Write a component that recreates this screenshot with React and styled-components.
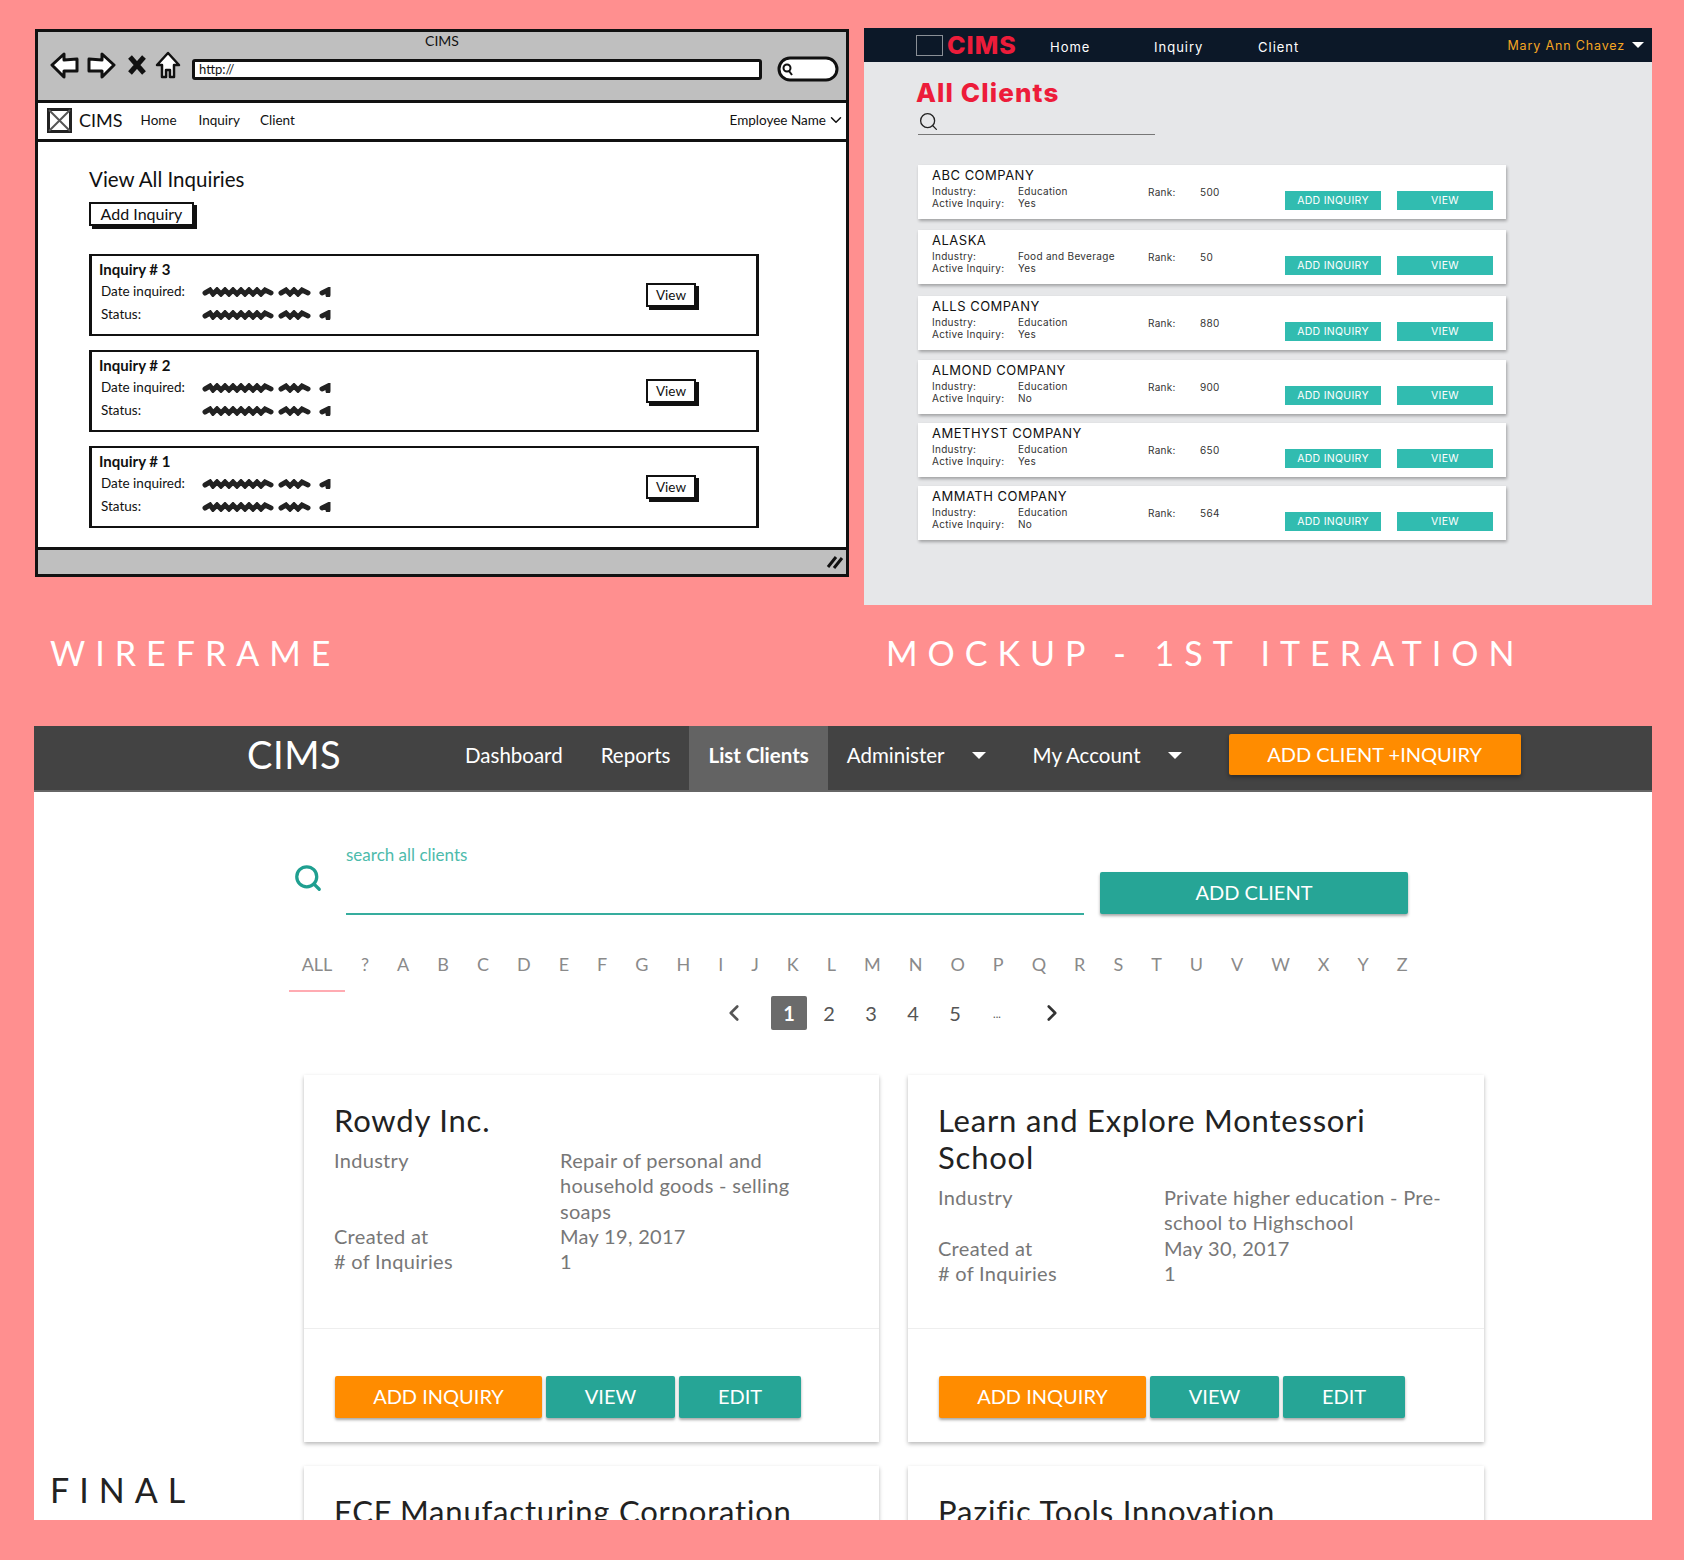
import React from "react";
import styled, { createGlobalStyle } from "styled-components";
import { Search, ChevronLeft, ChevronRight, ChevronDown } from "lucide-react";

const GlobalStyle = createGlobalStyle`
  html, body {
    margin: 0;
    padding: 0;
    background: #ff8f8f;
  }
  * {
    box-sizing: border-box;
  }
`;

const Page = styled.div`
  width: 1684px;
  height: 1560px;
  overflow: hidden;
  padding-top: 28px;
  background: #ff8f8f;
  font-family: "Lato", sans-serif;
`;
const TopRow = styled.div`
  display: flex;
  align-items: flex-start;
  gap: 15px;
  padding-left: 35px;
`;

/* wireframe */
const Wireframe = styled.div`
  width: 814px;
  height: 548px;
  margin-top: 1px;
  display: flex;
  flex-direction: column;
  background: #fff;
  border: 3px solid #111;
  color: #111;
  font-family: "Lato", sans-serif;
`;
const BrowserBar = styled.div`
  height: 71px;
  background: #bfbfbf;
  border-bottom: 3px solid #111;
`;
const BrowserTitle = styled.div`
  text-align: center;
  font-size: 14px;
  line-height: 20px;
  margin-top: -1px;
`;
const BrowserTools = styled.div`
  display: flex;
  align-items: center;
  padding-left: 12px;
  height: 28px;
`;
const UrlBox = styled.div`
  width: 570px;
  height: 21px;
  margin: 8px 0 0 11px;
  padding-left: 4px;
  background: #fff;
  border: 3px solid #111;
  border-radius: 3px;
  font-size: 13px;
  line-height: 15px;
`;
const OvalWrap = styled.div`
  display: flex;
  margin: 8px 0 0 15px;
`;
const WireNav = styled.div`
  height: 39px;
  display: flex;
  align-items: center;
  border-bottom: 3px solid #111;
  padding: 0 0 2px 9px;
  font-size: 13.5px;
`;
const WireBrand = styled.span`
  font-size: 18px;
  margin: 0 18px 0 7px;
`;
const WireLink = styled.span`
  margin-right: ${(props) => props.$gap}px;
`;
const WireUser = styled.span`
  margin-left: auto;
  margin-right: 1px;
  display: flex;
  align-items: center;
  gap: 1px;
`;
const WireMain = styled.div`
  flex: 1;
  padding: 24px 0 0 51px;
`;
const WireTitle = styled.div`
  font-size: 20.5px;
  line-height: 26px;
`;
const WireAdd = styled.div`
  width: 105px;
  height: 24px;
  margin: 10px 0 28px;
  text-align: center;
  font-size: 16px;
  line-height: 20px;
  border: 2px solid #111;
  box-shadow: 3px 3px 0 #111;
`;
const InquiryCard = styled.div`
  width: 670px;
  height: 82px;
  margin-bottom: 14px;
  padding: 2px 0 0 7px;
  display: flex;
  align-items: center;
  border: 3px solid #111;
  border-bottom-width: 2px;
  border-top-width: 2px;
`;
const InquiryText = styled.div`
  flex: 1;
  padding-bottom: 7px;
`;
const InquiryName = styled.div`
  font-size: 15px;
  font-weight: 700;
  line-height: 21px;
`;
const InquiryRow = styled.div`
  display: flex;
  align-items: center;
  font-size: 13.5px;
  line-height: 23px;
`;
const InquiryLabel = styled.span`
  width: 103px;
  padding-left: 2px;
`;
const WireView = styled.div`
  width: 50px;
  height: 24px;
  margin: 0 60px 2px 0;
  text-align: center;
  font-size: 13.5px;
  line-height: 20px;
  border: 2px solid #111;
  box-shadow: 3px 3px 0 #111;
`;
const StatusBar = styled.div`
  height: 27px;
  display: flex;
  align-items: center;
  justify-content: flex-end;
  padding-right: 2px;
  background: #bfbfbf;
  border-top: 3px solid #111;
`;

/* mockup */
const Mockup = styled.div`
  width: 788px;
  height: 577px;
  background: #e6e7e9;
  font-family: "Inter", sans-serif;
`;
const MockNav = styled.div`
  height: 34px;
  display: flex;
  align-items: center;
  padding-left: 52px;
  background: #0c1828;
  color: #fff;
  font-size: 13px;
  letter-spacing: 1px;
`;
const MockLogoBox = styled.div`
  width: 27px;
  height: 21px;
  border: 1px solid #8a8f96;
  background: #0c1828;
`;
const MockBrand = styled.span`
  width: 103px;
  margin-left: 4px;
  color: #ed1c3a;
  font-size: 25px;
  font-weight: 800;
  letter-spacing: 1px;
`;
const MockLink = styled.span`
  width: ${(props) => props.$width}px;
  padding-top: 3px;
`;
const MockUser = styled.span`
  margin-left: auto;
  margin-right: 8px;
  display: flex;
  align-items: center;
  gap: 7px;
  color: #f5a623;
  font-size: 12.5px;
  letter-spacing: 0.85px;
`;
const Caret = styled.span`
  display: inline-block;
  width: 0;
  height: 0;
  border-left: ${(props) => props.$size}px solid transparent;
  border-right: ${(props) => props.$size}px solid transparent;
  border-top: ${(props) => props.$size}px solid ${(props) => props.$color};
`;
const MockMain = styled.div`
  padding: 14px 0 0 54px;
`;
const MockTitle = styled.div`
  margin-left: -2px;
  color: #ed1c3a;
  font-size: 26px;
  font-weight: 800;
  line-height: 34px;
  letter-spacing: 1.1px;
`;
const MockSearch = styled.div`
  width: 237px;
  height: 25px;
  padding-top: 1px;
  border-bottom: 1px solid #777;
  color: #222;
`;
const MockCard = styled.div`
  width: 588px;
  height: 54px;
  margin-top: ${(props) => props.$top}px;
  padding: 1px 0 0 14px;
  display: grid;
  grid-template-columns: 86px 130px 52px 85px 112px 96px;
  grid-template-rows: 18px 13px 12px;
  align-items: center;
  background: #fff;
  box-shadow: 1px 2px 3px rgba(0, 0, 0, 0.3);
  color: #333;
  font-size: 10px;
  letter-spacing: 0.3px;
`;
const MockName = styled.div`
  grid-column: 1 / -1;
  color: #111;
  font-size: 13px;
  line-height: 18px;
  letter-spacing: 0.5px;
`;
const MockCell = styled.div`
  grid-column: ${(props) => props.$col};
  grid-row: ${(props) => props.$row};
`;
const MockRank = styled.div`
  grid-column: ${(props) => props.$col};
  grid-row: 2 / 4;
  padding-bottom: 9px;
`;
const MockButton = styled.div`
  grid-column: ${(props) => props.$col};
  grid-row: 2 / 4;
  width: 96px;
  height: 19px;
  margin-top: 7px;
  background: #31bcb0;
  color: #fff;
  text-align: center;
  font-size: 10.5px;
  line-height: 19px;
`;

/* section captions */
const Captions = styled.div`
  display: flex;
  height: 121px;
  padding: 27px 0 0 50px;
  color: #fff;
  font-size: 34px;
  font-weight: 400;
  line-height: 42px;
`;
const Caption = styled.div`
  width: ${(props) => props.$width}px;
  letter-spacing: ${(props) => props.$spacing}px;
  white-space: nowrap;
`;

/* final design */
const Final = styled.div`
  position: relative;
  width: 1618px;
  height: 794px;
  margin-left: 34px;
  overflow: hidden;
  background: #fff;
`;
const FinalLabel = styled.div`
  position: absolute;
  left: 16px;
  bottom: 9px;
  color: #222;
  font-size: 34px;
  font-weight: 400;
  line-height: 42px;
  letter-spacing: 10px;
`;
const FinalNav = styled.div`
  height: 66px;
  display: flex;
  align-items: flex-start;
  padding-left: 213px;
  background: #434343;
  border-bottom: 2px solid #666;
  color: #fff;
  font-size: 20.5px;
`;
const FinalBrand = styled.div`
  width: 199px;
  height: 58px;
  line-height: 56px;
  font-size: 38px;
  letter-spacing: 0.6px;
`;
const FinalLink = styled.div`
  height: 64px;
  padding: 0 ${(props) => props.$right || 19}px 6px 19px;
  display: flex;
  align-items: center;
  background: ${(props) => (props.$active ? "#636363" : "transparent")};
  font-weight: ${(props) => (props.$active ? 700 : 400)};
`;
const NavCaretGap = styled.span`
  display: flex;
  margin-left: 27px;
`;
const CtaButton = styled.div`
  width: 292px;
  height: 41px;
  margin: 8px 0 0 28px;
  background: #ff8c00;
  border-radius: 2px;
  box-shadow: 0 2px 4px rgba(0, 0, 0, 0.4);
  text-align: center;
  font-size: 20px;
  line-height: 41px;
`;
const SearchRow = styled.div`
  display: flex;
  align-items: flex-start;
  padding: 53px 0 0 259px;
`;
const SearchIconWrap = styled.div`
  width: 87px;
  padding-top: 18px;
  margin-right: -34px;
  color: #1f9f90;
`;
const SearchField = styled.div`
  width: 738px;
  height: 70px;
  border-bottom: 2px solid #36ad9e;
  color: #4dbbab;
  font-size: 17px;
  line-height: 20px;
`;
const TealButton = styled.div`
  width: ${(props) => props.$width}px;
  height: 42px;
  background: #26a596;
  border-radius: 2px;
  box-shadow: 0 2px 3px rgba(0, 0, 0, 0.35);
  color: #fff;
  text-align: center;
  font-size: 20px;
  line-height: 40px;
`;
const AddClient = styled(TealButton)`
  margin: 27px 0 0 16px;
`;
const AlphaRow = styled.div`
  display: flex;
  align-items: center;
  height: 41px;
  margin: 36px 0 0 255px;
  color: #8a8a8a;
  font-size: 18px;
`;
const AlphaAll = styled.div`
  width: 56px;
  height: 41px;
  padding-top: 2px;
  margin-right: 2px;
  text-align: center;
  border-bottom: 2px solid #ffabb2;
`;
const AlphaLetter = styled.div`
  padding: 0 14px;
  margin-top: -16px;
`;
const Pager = styled.div`
  display: flex;
  align-items: center;
  height: 34px;
  margin: 4px 0 0 687px;
  color: #555;
  font-size: 20px;
`;
const PagerCurrent = styled.div`
  width: 36px;
  height: 34px;
  margin: 0 1px 0 24px;
  background: #6b6b6b;
  border-radius: 2px;
  color: #fff;
  font-weight: 700;
  text-align: center;
  line-height: 34px;
`;
const PagerItem = styled.div`
  width: 42px;
  text-align: center;
  font-size: ${(props) => (props.$small ? 11 : 20)}px;
`;
const NextWrap = styled.div`
  display: flex;
  margin-left: 21px;
  color: #333;
`;
const CardGrid = styled.div`
  display: grid;
  grid-template-columns: 575px 576px;
  grid-auto-rows: 367px;
  column-gap: 29px;
  row-gap: 24px;
  margin: 45px 0 0 270px;
`;
const Card = styled.div`
  display: flex;
  flex-direction: column;
  background: #fff;
  box-shadow: 0 2px 4px rgba(0, 0, 0, 0.28);
`;
const CardBody = styled.div`
  height: 254px;
  padding: 27px 30px 0;
  border-bottom: 1px solid #eee;
`;
const CardTitle = styled.div`
  color: #222;
  font-size: 31px;
  line-height: 37px;
  letter-spacing: 0.8px;
  margin-bottom: 9px;
  white-space: nowrap;
`;
const InfoGrid = styled.div`
  display: grid;
  grid-template-columns: 226px 1fr;
  color: #777;
  font-size: 20px;
  line-height: 25.3px;
  letter-spacing: 0.3px;
`;
const CardActions = styled.div`
  display: flex;
  gap: 4px;
  padding: 47px 0 0 31px;
`;
const OrangeButton = styled(TealButton)`
  background: #ff8c00;
`;

const BackArrow = ({ flip }) => (
  <svg width="30" height="28" viewBox="0 0 30 28" style={flip ? { transform: "scaleX(-1)", marginLeft: 6 } : undefined}>
    <path d="M2 14 L14 3 L14 9 L27 8 L27 20 L14 20 L14 26 Z" fill="#fff" stroke="#111" strokeWidth="3" strokeLinejoin="round" />
  </svg>
);

const StopIcon = () => (
  <svg width="20" height="20" viewBox="0 0 20 20" style={{ marginLeft: 11 }}>
    <path d="M3 2 L17 18 M17 2 L3 18" stroke="#111" strokeWidth="5" />
  </svg>
);

const HomeIcon = () => (
  <svg width="26" height="28" viewBox="0 0 26 28" style={{ marginLeft: 8 }}>
    <path d="M13 2 L24 14 L19 14 L19 26 L15 26 L15 19 L11 19 L11 26 L7 26 L7 14 L2 14 Z" fill="#fff" stroke="#111" strokeWidth="2.5" strokeLinejoin="round" />
  </svg>
);

const SearchOval = () => (
  <svg width="62" height="26" viewBox="0 0 62 26">
    <rect x="2" y="2" width="58" height="22" rx="11" fill="#fff" stroke="#111" strokeWidth="3" />
    <circle cx="10" cy="12" r="3.5" fill="none" stroke="#111" strokeWidth="2" />
    <path d="M12 15 L15 19" stroke="#111" strokeWidth="2" />
  </svg>
);

const WireLogo = () => (
  <svg width="25" height="25" viewBox="0 0 25 25">
    <rect x="1.5" y="1.5" width="22" height="22" fill="#fff" stroke="#222" strokeWidth="3" />
    <path d="M2 2 L23 23 M23 2 L2 23" stroke="#555" strokeWidth="2" />
  </svg>
);

const Scribble = () => (
  <svg width="130" height="10" viewBox="0 0 130 10">
    <g fill="none" stroke="#222" strokeWidth="5" strokeLinecap="round">
      <path d="M3 6 L8 3 L11 7 L15 3 L19 7 L23 3 L27 7 L31 3 L35 7 L39 3 L43 7 L47 3 L51 7 L55 3 L59 7 L63 3 L69 6" />
      <path d="M79 6 L84 3 L88 7 L92 3 L96 7 L100 3 L106 6" />
      <path d="M120 6 L126 3 L126 8" />
    </g>
  </svg>
);

const ResizeGrip = () => (
  <svg width="18" height="14" viewBox="0 0 18 14">
    <path d="M2 12 L10 2 M8 13 L16 3" stroke="#111" strokeWidth="3" />
  </svg>
);

const inquiries = [
  { id: 3 },
  { id: 2 },
  { id: 1 },
];

const mockClients = [
  { name: "ABC COMPANY", industry: "Education", active: "Yes", rank: "500", top: 30 },
  { name: "ALASKA", industry: "Food and Beverage", active: "Yes", rank: "50", top: 11 },
  { name: "ALLS COMPANY", industry: "Education", active: "Yes", rank: "880", top: 12 },
  { name: "ALMOND COMPANY", industry: "Education", active: "No", rank: "900", top: 10 },
  { name: "AMETHYST COMPANY", industry: "Education", active: "Yes", rank: "650", top: 9 },
  { name: "AMMATH COMPANY", industry: "Education", active: "No", rank: "564", top: 9 },
];

const letters = "?ABCDEFGHIJKLMNOPQRSTUVWXYZ".split("");

const WireframePanel = () => (
  <Wireframe>
    <BrowserBar>
      <BrowserTitle>CIMS</BrowserTitle>
      <BrowserTools>
        <BackArrow />
        <BackArrow flip />
        <StopIcon />
        <HomeIcon />
        <UrlBox>http://</UrlBox>
        <OvalWrap>
          <SearchOval />
        </OvalWrap>
      </BrowserTools>
    </BrowserBar>
    <WireNav>
      <WireLogo />
      <WireBrand>CIMS</WireBrand>
      <WireLink $gap={22}>Home</WireLink>
      <WireLink $gap={20}>Inquiry</WireLink>
      <WireLink $gap={0}>Client</WireLink>
      <WireUser>
        Employee Name
        <ChevronDown size={18} strokeWidth={2} />
      </WireUser>
    </WireNav>
    <WireMain>
      <WireTitle>View All Inquiries</WireTitle>
      <WireAdd>Add Inquiry</WireAdd>
      {inquiries.map((item) => (
        <InquiryCard key={item.id}>
          <InquiryText>
            <InquiryName>Inquiry # {item.id}</InquiryName>
            <InquiryRow>
              <InquiryLabel>Date inquired:</InquiryLabel>
              <Scribble />
            </InquiryRow>
            <InquiryRow>
              <InquiryLabel>Status:</InquiryLabel>
              <Scribble />
            </InquiryRow>
          </InquiryText>
          <WireView>View</WireView>
        </InquiryCard>
      ))}
    </WireMain>
    <StatusBar>
      <ResizeGrip />
    </StatusBar>
  </Wireframe>
);

const MockupPanel = () => (
  <Mockup>
    <MockNav>
      <MockLogoBox />
      <MockBrand>CIMS</MockBrand>
      <MockLink $width={104}>Home</MockLink>
      <MockLink $width={104}>Inquiry</MockLink>
      <MockLink $width={100}>Client</MockLink>
      <MockUser>
        Mary Ann Chavez
        <Caret $size={6} $color="#fff" />
      </MockUser>
    </MockNav>
    <MockMain>
      <MockTitle>All Clients</MockTitle>
      <MockSearch>
        <Search size={21} strokeWidth={1.5} />
      </MockSearch>
      {mockClients.map((client) => (
        <MockCard key={client.name} $top={client.top}>
          <MockName>{client.name}</MockName>
          <MockCell $col={1} $row={2}>Industry:</MockCell>
          <MockCell $col={2} $row={2}>{client.industry}</MockCell>
          <MockCell $col={1} $row={3}>Active Inquiry:</MockCell>
          <MockCell $col={2} $row={3}>{client.active}</MockCell>
          <MockRank $col={3}>Rank:</MockRank>
          <MockRank $col={4}>{client.rank}</MockRank>
          <MockButton $col={5}>ADD INQUIRY</MockButton>
          <MockButton $col={6}>VIEW</MockButton>
        </MockCard>
      ))}
    </MockMain>
  </Mockup>
);

const ClientCard = ({ title, industry, created }) => (
  <Card>
    <CardBody>
      <CardTitle>{title}</CardTitle>
      <InfoGrid>
        <div>Industry</div>
        <div>{industry}</div>
        <div>Created at</div>
        <div>{created}</div>
        <div># of Inquiries</div>
        <div>1</div>
      </InfoGrid>
    </CardBody>
    <CardActions>
      <OrangeButton $width={207}>ADD INQUIRY</OrangeButton>
      <TealButton $width={129}>VIEW</TealButton>
      <TealButton $width={122}>EDIT</TealButton>
    </CardActions>
  </Card>
);

const FinalPanel = () => (
  <Final>
    <FinalNav>
      <FinalBrand>CIMS</FinalBrand>
      <FinalLink>Dashboard</FinalLink>
      <FinalLink>Reports</FinalLink>
      <FinalLink $active>List Clients</FinalLink>
      <FinalLink $right={28}>
        Administer
        <NavCaretGap>
          <Caret $size={7} $color="#fff" />
        </NavCaretGap>
      </FinalLink>
      <FinalLink $right={19}>
        My Account
        <NavCaretGap>
          <Caret $size={7} $color="#fff" />
        </NavCaretGap>
      </FinalLink>
      <CtaButton>ADD CLIENT +INQUIRY</CtaButton>
    </FinalNav>
    <SearchRow>
      <SearchIconWrap>
        <Search size={30} strokeWidth={2.6} />
      </SearchIconWrap>
      <SearchField>search all clients</SearchField>
      <AddClient $width={308}>ADD CLIENT</AddClient>
    </SearchRow>
    <AlphaRow>
      <AlphaAll>ALL</AlphaAll>
      {letters.map((letter) => (
        <AlphaLetter key={letter}>{letter}</AlphaLetter>
      ))}
    </AlphaRow>
    <Pager>
      <ChevronLeft size={26} strokeWidth={2.4} />
      <PagerCurrent>1</PagerCurrent>
      {["2", "3", "4", "5"].map((page) => (
        <PagerItem key={page}>{page}</PagerItem>
      ))}
      <PagerItem $small>...</PagerItem>
      <NextWrap>
        <ChevronRight size={26} strokeWidth={2.4} />
      </NextWrap>
    </Pager>
    <CardGrid>
      <ClientCard
        title="Rowdy Inc."
        industry={<>Repair of personal and<br />household goods - selling<br />soaps</>}
        created="May 19, 2017"
      />
      <ClientCard
        title={<>Learn and Explore Montessori<br />School</>}
        industry={<>Private higher education - Pre-<br />school to Highschool</>}
        created="May 30, 2017"
      />
      <Card>
        <CardBody>
          <CardTitle>FCF Manufacturing Corporation</CardTitle>
        </CardBody>
      </Card>
      <Card>
        <CardBody>
          <CardTitle>Pazific Tools Innovation</CardTitle>
        </CardBody>
      </Card>
    </CardGrid>
    <FinalLabel>FINAL</FinalLabel>
  </Final>
);

const App = () => {
  return (
    <Page>
      <GlobalStyle />
      <TopRow>
        <WireframePanel />
        <MockupPanel />
      </TopRow>
      <Captions>
        <Caption $width={836} $spacing={10}>WIREFRAME</Caption>
        <Caption $width={700} $spacing={10}>MOCKUP - 1ST ITERATION</Caption>
      </Captions>
      <FinalPanel />
    </Page>
  );
};

export default App;
